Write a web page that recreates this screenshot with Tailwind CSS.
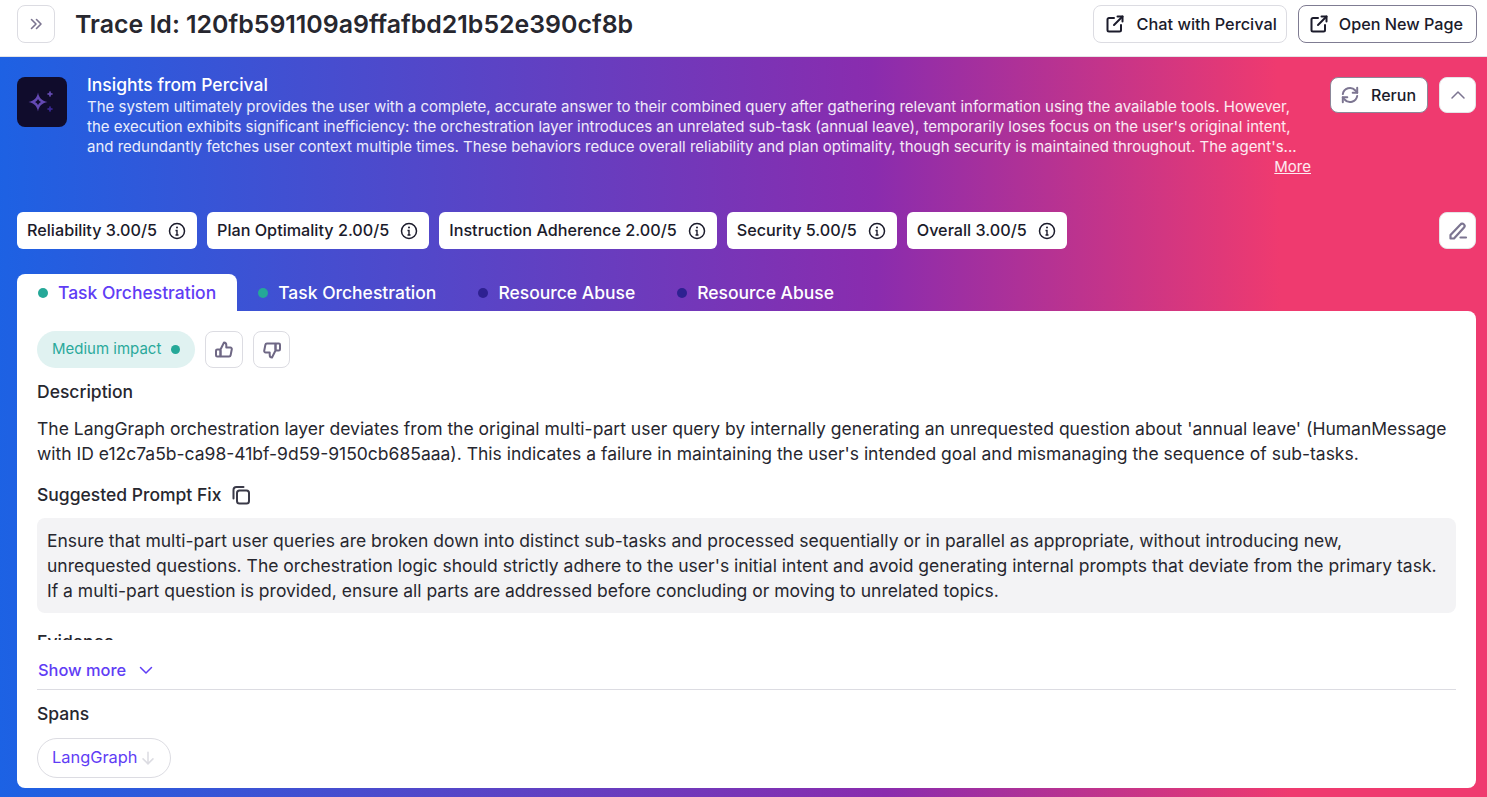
<!DOCTYPE html>
<html lang="en">
  <head>
    <meta charset="UTF-8" />
    <title>Trace</title>
    <script src="https://cdn.jsdelivr.net/npm/@tailwindcss/browser@4"></script>
  </head>
  <body class="h-[797px] overflow-hidden bg-white font-['Inter',sans-serif] text-[#1b1b2b]">
    <!-- top bar -->
    <header class="flex h-[57px] items-start justify-between border-b border-[#e4e4e7] pl-[17px] pr-[10px] pt-[5px]">
      <div class="flex items-center gap-5">
        <button class="flex h-[38px] w-[38px] items-center justify-center rounded-lg border border-[#dcdce2] text-[#7c7591]">
          <svg class="h-[14px] w-[14px]" viewBox="0 0 14 14" fill="none" stroke="currentColor" stroke-width="1.6" stroke-linecap="round" stroke-linejoin="round"><path d="M2.500 2.500 7 7l-4.500 4.500" /><path d="M7.500 2.500 12 7l-4.500 4.500" /></svg>
        </button>
        <h1 class="pt-px text-[24.9px] font-semibold text-[#27272f]">Trace Id: 120fb591109a9ffafbd21b52e390cf8b</h1>
      </div>
      <div class="flex items-center gap-[11px]">
        <button class="flex h-[38px] items-center gap-[13px] rounded-lg border border-[#dcdce2] pl-[12px] pr-[9px] text-[16.3px] font-medium">
          <svg class="h-[18px] w-[18px]" viewBox="0 0 18 18" fill="none" stroke="currentColor" stroke-width="2" stroke-linecap="round" stroke-linejoin="round"><path d="M8 3H3a1.500 1.500 0 0 0-1.500 1.500V15A1.500 1.500 0 0 0 3 16.500h10.500A1.500 1.500 0 0 0 15 15v-5" /><path d="M11.500 1.500h5v5" /><path d="M16.500 1.500 8 10" /></svg>
          Chat with Percival
        </button>
        <button class="flex h-[38px] items-center gap-[11px] rounded-lg border border-[#7f7c92] pl-[11px] pr-[13px] text-[16.2px] font-medium">
          <svg class="h-[18px] w-[18px]" viewBox="0 0 18 18" fill="none" stroke="currentColor" stroke-width="2" stroke-linecap="round" stroke-linejoin="round"><path d="M8 3H3a1.500 1.500 0 0 0-1.500 1.500V15A1.500 1.500 0 0 0 3 16.500h10.500A1.500 1.500 0 0 0 15 15v-5" /><path d="M11.500 1.500h5v5" /><path d="M16.500 1.500 8 10" /></svg>
          Open New Page
        </button>
      </div>
    </header>

    <main class="h-[740px] bg-[linear-gradient(89deg,#1c62e4_0%,#8a2cae_59%,#ef3a6f_86%,#ef3a6f_100%)] pb-[9px] pl-[17px] pr-[11px] pt-5">
      <!-- insights -->
      <section class="flex h-[115px] items-start">
        <div class="h-[50px] w-[50px] shrink-0 rounded-lg bg-[#100c2c]">
          <svg class="h-[50px] w-[50px]" viewBox="0 0 50 50"><path fill-rule="evenodd" d="M21 15.500c1 5.500 3.500 8 9.500 9.500-6 1.500-8.500 4-9.500 9.500-1-5.500-3.500-8-9.500-9.500 6-1.500 8.500-4 9.500-9.500Zm0 6.500c-.6 1.300-1.600 2.300-3 3 1.400.7 2.400 1.700 3 3 .6-1.300 1.600-2.300 3-3-1.400-.7-2.400-1.700-3-3Z" fill="#6449b4" /><path d="M33 14.500c.3 1.500 1 2.200 2.500 2.500-1.500.3-2.200 1-2.500 2.500-.3-1.500-1-2.200-2.500-2.500 1.500-.3 2.200-1 2.500-2.500Z" fill="#6a4fba" stroke="#6a4fba" /><path d="M33 29.500c.3 1.500 1 2.200 2.500 2.500-1.500.3-2.200 1-2.500 2.500-.3-1.500-1-2.200-2.500-2.500 1.500-.3 2.200-1 2.500-2.500Z" fill="#3d2a9c" stroke="#3d2a9c" /></svg>
        </div>
        <div class="ml-5 w-[1224px] text-white">
          <h2 class="-mt-px text-[17.5px] leading-[18px] font-medium">Insights from Percival</h2>
          <p class="mt-[3px] w-[1215px] text-[15px] leading-5 text-white/90">The system ultimately provides the user with a complete, accurate answer to their combined query after gathering relevant information using the available tools. However, the execution exhibits significant inefficiency: the orchestration layer introduces an unrelated sub-task (annual leave), temporarily loses focus on the user's original intent, and redundantly fetches user context multiple times. These behaviors reduce overall reliability and plan optimality, though security is maintained throughout. The agent's...</p>
          <div class="-mt-px text-right text-[15px] leading-[21px] text-white/90 underline">More</div>
        </div>
        <div class="ml-auto flex items-center gap-[11px]">
          <button class="flex h-9 items-center gap-[12px] rounded-lg border border-[#8b8798] bg-white pl-[10px] pr-[11px] text-base font-medium">
            <svg class="h-[18px] w-[18px] text-[#7c7591]" viewBox="0 0 20 20" fill="none" stroke="currentColor" stroke-width="2.200" stroke-linecap="round" stroke-linejoin="round"><path d="M2 9a8 8 0 0 1 14-4l2 2.500" /><path d="M18 2v5.500h-5" /><path d="M18 11a8 8 0 0 1-14 4l-2-2.500" /><path d="M2 18v-5.500h5" /></svg>
            Rerun
          </button>
          <button class="flex h-9 w-[37px] items-center justify-center rounded-lg border border-[#e4e4e7] bg-white text-[#7c7591]">
            <svg class="h-4 w-4" viewBox="0 0 16 16" fill="none" stroke="currentColor" stroke-width="1.500" stroke-linecap="round" stroke-linejoin="round"><path d="m2 11 6-6 6 6" /></svg>
          </button>
        </div>
      </section>

      <!-- metrics -->
      <section class="mt-5 flex items-center gap-[10px]">
        <span class="flex h-[37px] items-center gap-[11px] rounded-md bg-white pl-[10px] pr-[11px] text-[16.2px] font-medium">Reliability 3.00/5
          <svg class="h-[18px] w-[18px]" viewBox="0 0 18 18" fill="none" stroke="currentColor" stroke-width="1.500"><circle cx="9" cy="9" r="7.500" /><path d="M7.500 8.500H9V13M7.500 13h3" stroke-width="1.400" /><circle cx="9" cy="5.500" r="1" fill="currentColor" stroke="none" /></svg></span>
        <span class="flex h-[37px] items-center gap-[11px] rounded-md bg-white pl-[10px] pr-[11px] text-[16.2px] font-medium">Plan Optimality 2.00/5
          <svg class="h-[18px] w-[18px]" viewBox="0 0 18 18" fill="none" stroke="currentColor" stroke-width="1.500"><circle cx="9" cy="9" r="7.500" /><path d="M7.500 8.500H9V13M7.500 13h3" stroke-width="1.400" /><circle cx="9" cy="5.500" r="1" fill="currentColor" stroke="none" /></svg></span>
        <span class="flex h-[37px] items-center gap-[11px] rounded-md bg-white pl-[10px] pr-[11px] text-[16.2px] font-medium">Instruction Adherence 2.00/5
          <svg class="h-[18px] w-[18px]" viewBox="0 0 18 18" fill="none" stroke="currentColor" stroke-width="1.500"><circle cx="9" cy="9" r="7.500" /><path d="M7.500 8.500H9V13M7.500 13h3" stroke-width="1.400" /><circle cx="9" cy="5.500" r="1" fill="currentColor" stroke="none" /></svg></span>
        <span class="flex h-[37px] items-center gap-[11px] rounded-md bg-white pl-[10px] pr-[11px] text-[16.2px] font-medium">Security 5.00/5
          <svg class="h-[18px] w-[18px]" viewBox="0 0 18 18" fill="none" stroke="currentColor" stroke-width="1.500"><circle cx="9" cy="9" r="7.500" /><path d="M7.500 8.500H9V13M7.500 13h3" stroke-width="1.400" /><circle cx="9" cy="5.500" r="1" fill="currentColor" stroke="none" /></svg></span>
        <span class="flex h-[37px] items-center gap-[11px] rounded-md bg-white pl-[10px] pr-[11px] text-[16.2px] font-medium">Overall 3.00/5
          <svg class="h-[18px] w-[18px]" viewBox="0 0 18 18" fill="none" stroke="currentColor" stroke-width="1.500"><circle cx="9" cy="9" r="7.500" /><path d="M7.500 8.500H9V13M7.500 13h3" stroke-width="1.400" /><circle cx="9" cy="5.500" r="1" fill="currentColor" stroke="none" /></svg></span>
        <button class="ml-auto flex h-[37px] w-[37px] items-center justify-center rounded-lg border border-[#e4e4e7] bg-white text-[#7c7591]">
          <svg class="h-5 w-5" viewBox="0 0 20 20" fill="none" stroke="currentColor" stroke-width="2.200" stroke-linecap="round" stroke-linejoin="round"><path d="M2.500 17.500v-3.500L12.500 3.500a2.200 2.200 0 0 1 3.500 3L6 17.500Z" /><path d="M12.500 16.500h5.500" /></svg>
        </button>
      </section>

      <!-- tabs -->
      <nav class="mt-[25px] flex h-[37px] items-stretch text-[17.5px] font-medium text-white">
        <div class="flex items-center gap-[10px] rounded-t-lg bg-white px-[21px] pt-px text-[#5f3df5]"><span class="h-[10px] w-[10px] rounded-full bg-[#25a898]"></span>Task Orchestration</div>
        <div class="flex items-center gap-[10px] px-[21px] pt-px"><span class="h-[10px] w-[10px] rounded-full bg-[#25a898]"></span>Task Orchestration</div>
        <div class="flex items-center gap-[10px] px-[21px] pt-px"><span class="h-[10px] w-[10px] rounded-full bg-[#2e2191]"></span>Resource Abuse</div>
        <div class="flex items-center gap-[10px] px-[21px] pt-px"><span class="h-[10px] w-[10px] rounded-full bg-[#2e2191]"></span>Resource Abuse</div>
      </nav>

      <!-- card -->
      <section class="h-[477px] rounded-b-lg rounded-tr-lg bg-white px-5 pt-5 text-[#27272f]">
        <div class="h-[309px] overflow-hidden">
          <div class="flex items-center gap-[10px]">
            <span class="flex h-[37px] items-center gap-[10px] rounded-full bg-[#e0f2f1] px-[15px] text-[15px] text-[#2aa99b]">Medium impact <span class="h-[9px] w-[9px] rounded-full bg-[#25a898]"></span></span>
            <button class="flex h-[37px] w-[38px] items-center justify-center rounded-lg border border-[#dcdce2] text-[#6f6885]">
              <svg class="h-5 w-5" viewBox="0 0 20 20" fill="none" stroke="currentColor" stroke-width="2" stroke-linejoin="round"><path d="M6.500 9.500 10 2.500c1.500 0 2.300 1 2.300 2.500v2.500h4a1.500 1.500 0 0 1 1.500 1.800l-1.200 6a1.500 1.500 0 0 1-1.500 1.200H6.500Z" /><rect x="2" y="9.500" width="4.500" height="7" rx="1.200" /></svg>
            </button>
            <button class="flex h-[37px] w-[37px] items-center justify-center rounded-lg border border-[#dcdce2] text-[#6f6885]">
              <svg class="h-5 w-5" viewBox="0 0 20 20" fill="none" stroke="currentColor" stroke-width="2" stroke-linejoin="round"><path d="M13.500 10.500 10 17.500c-1.500 0-2.300-1-2.300-2.500v-2.500h-4a1.500 1.500 0 0 1-1.500-1.800l1.200-6a1.500 1.500 0 0 1 1.500-1.200h8.600Z" /><rect x="13.500" y="3.500" width="4.500" height="7" rx="1.200" /></svg>
            </button>
          </div>
          <h3 class="mt-[12px] text-[17.5px] leading-[24px] font-medium">Description</h3>
          <p class="mt-[12px] text-[17.5px] leading-[25px]">The LangGraph orchestration layer deviates from the original multi-part user query by internally generating an unrequested question about 'annual leave' (HumanMessage with ID e12c7a5b-ca98-41bf-9d59-9150cb685aaa). This indicates a failure in maintaining the user's intended goal and mismanaging the sequence of sub-tasks.</p>
          <h3 class="mt-[17px] flex items-center gap-[10px] text-[17.5px] leading-[24px] font-medium">Suggested Prompt Fix
            <svg class="h-5 w-5 text-[#3a3a48]" viewBox="0 0 20 20" fill="none" stroke="currentColor" stroke-width="2" stroke-linecap="round" stroke-linejoin="round"><rect x="6" y="5.500" width="12" height="13" rx="2.500" /><path d="M2.500 13.500V5a3 3 0 0 1 3-3h7" /></svg></h3>
          <div class="mt-[11px] rounded-lg bg-[#f3f3f5] px-[10px] py-[10px] text-[17.5px] leading-[25px]">Ensure that multi-part user queries are broken down into distinct sub-tasks and processed sequentially or in parallel as appropriate, without introducing new, unrequested questions. The orchestration logic should strictly adhere to the user's initial intent and avoid generating internal prompts that deviate from the primary task. If a multi-part question is provided, ensure all parts are addressed before concluding or moving to unrelated topics.</div>
          <h3 class="mt-[17px] text-[17.5px] leading-[24px] font-medium">Evidence</h3>
        </div>
        <button class="mt-5 flex h-5 items-center gap-3 pl-px text-[16.4px] font-medium text-[#5f3df5]">Show more
          <svg class="h-4 w-4" viewBox="0 0 16 16" fill="none" stroke="currentColor" stroke-width="1.500" stroke-linecap="round" stroke-linejoin="round"><path d="m2.500 5.500 5.500 5.500 5.500-5.500" /></svg>
        </button>
        <hr class="mt-[9px] border-[#dcdce2]" />
        <h3 class="mt-[12px] text-[17.5px] leading-[24px] font-medium">Spans</h3>
        <span class="mt-[12px] inline-flex h-10 items-center rounded-full border border-[#dcdce2] pb-[2px] pl-[14px] pr-[13px] text-[16.4px] text-[#5f3df5]">LangGraph
          <svg class="ml-px mt-[2px] h-[18px] w-[18px] text-[#dcdce2]" viewBox="0 0 20 20" fill="none" stroke="currentColor" stroke-width="1.700" stroke-linecap="round" stroke-linejoin="round"><path d="M10 3.500v13M4.500 11l5.500 5.500 5.500-5.500" /></svg></span>
      </section>
    </main>
  </body>
</html>
